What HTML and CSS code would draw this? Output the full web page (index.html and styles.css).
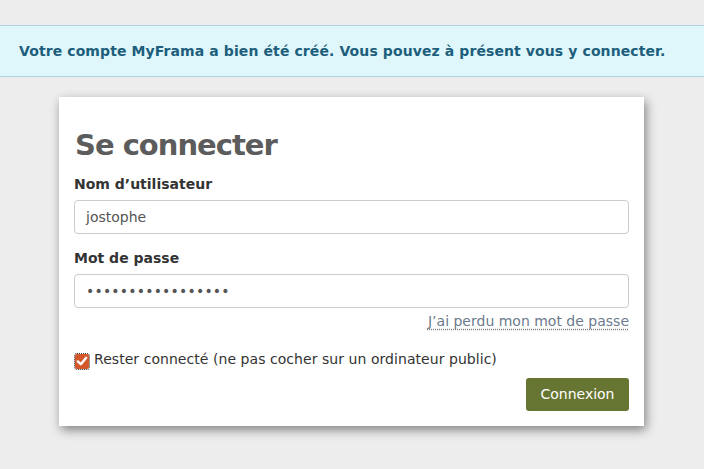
FILE: index.html
```html
<!DOCTYPE html>
<html lang="fr">
<head>
<meta charset="utf-8">
<link rel="stylesheet" href="styles.css">
</head>
<body>
<div class="alert">Votre compte MyFrama a bien été créé. Vous pouvez à présent vous y connecter.</div>
<main class="card">
  <h1 class="title">Se connecter</h1>
  <label class="label">Nom d’utilisateur</label>
  <div class="input">jostophe</div>
  <label class="label label-2">Mot de passe</label>
  <div class="input pass">•••••••••••••••••</div>
  <div class="lost-row"><a class="lost">J’ai perdu mon mot de passe</a></div>
  <div class="remember">
    <span class="check"><svg width="14" height="14" viewBox="0 0 14 14"><path d="M2.8 7.4 L5.8 10.2 L11.2 3.8" fill="none" stroke="#fff" stroke-width="2.4" stroke-linecap="round" stroke-linejoin="round"/></svg></span>
    <span class="remember-text">Rester connecté (ne pas cocher sur un ordinateur public)</span>
  </div>
  <div class="actions"><span class="btn">Connexion</span></div>
</main>
</body>
</html>
```
FILE: styles.css
```css
html, body { margin: 0; padding: 0; }
body {
  background: #ededed;
  font-family: "DejaVu Sans", sans-serif;
  font-size: 14px;
  color: #333;
  padding-top: 25px;
  height: 444px;
  overflow: hidden;
}
.alert {
  background: #dff7fb;
  border-top: 1px solid #aed6df;
  border-bottom: 1px solid #aed6df;
  height: 50px;
  line-height: 50px;
  padding-left: 19px;
  font-weight: bold;
  letter-spacing: 0.1px;
  color: #1d5e7c;
}
.card {
  margin: 20px 0 0 59px;
  width: 555px;
  padding: 15px 15px 15px 15px;
  height: 299px;
  background: #fff;
  box-shadow: 2px 4px 10px rgba(0,0,0,0.45);
}
.title {
  margin: 16px 0 0 1px;
  font-size: 29px;
  line-height: 34px;
  font-weight: bold;
  letter-spacing: -1px;
  color: #5c5c5c;
}
.label {
  display: block;
  margin-top: 12px;
  font-weight: bold;
  line-height: 20px;
  color: #333;
}
.label-2 { margin-top: 14px; }
.input {
  margin-top: 6px;
  height: 32px;
  border: 1px solid #ccc;
  border-radius: 4px;
  line-height: 32px;
  padding-left: 11px;
  color: #555;
}
.pass { letter-spacing: 0.2px; }
.lost-row {
  display: flex;
  justify-content: flex-end;
  margin-top: 4px;
  line-height: 18px;
}
.lost {
  color: #6c7b8c;
  text-decoration: underline dotted #777;
  text-underline-offset: 3px;
}
.remember {
  display: flex;
  align-items: center;
  gap: 5px;
  margin-top: 19px;
  line-height: 20px;
  padding-left: 1px;
}
.remember-text { letter-spacing: 0.05px; }
.check {
  width: 14px;
  height: 15px;
  background: #d4572c;
  border-radius: 2px;
  outline: 1px dotted #333;
  display: flex;
  align-items: center;
  justify-content: center;
  margin-top: 4px;
}
.actions {
  display: flex;
  justify-content: flex-end;
  margin-top: 9px;
}
.btn {
  background: #677532;
  color: #fff;
  border-radius: 3px;
  height: 33px;
  line-height: 33px;
  padding: 0 14.5px;
}
```
